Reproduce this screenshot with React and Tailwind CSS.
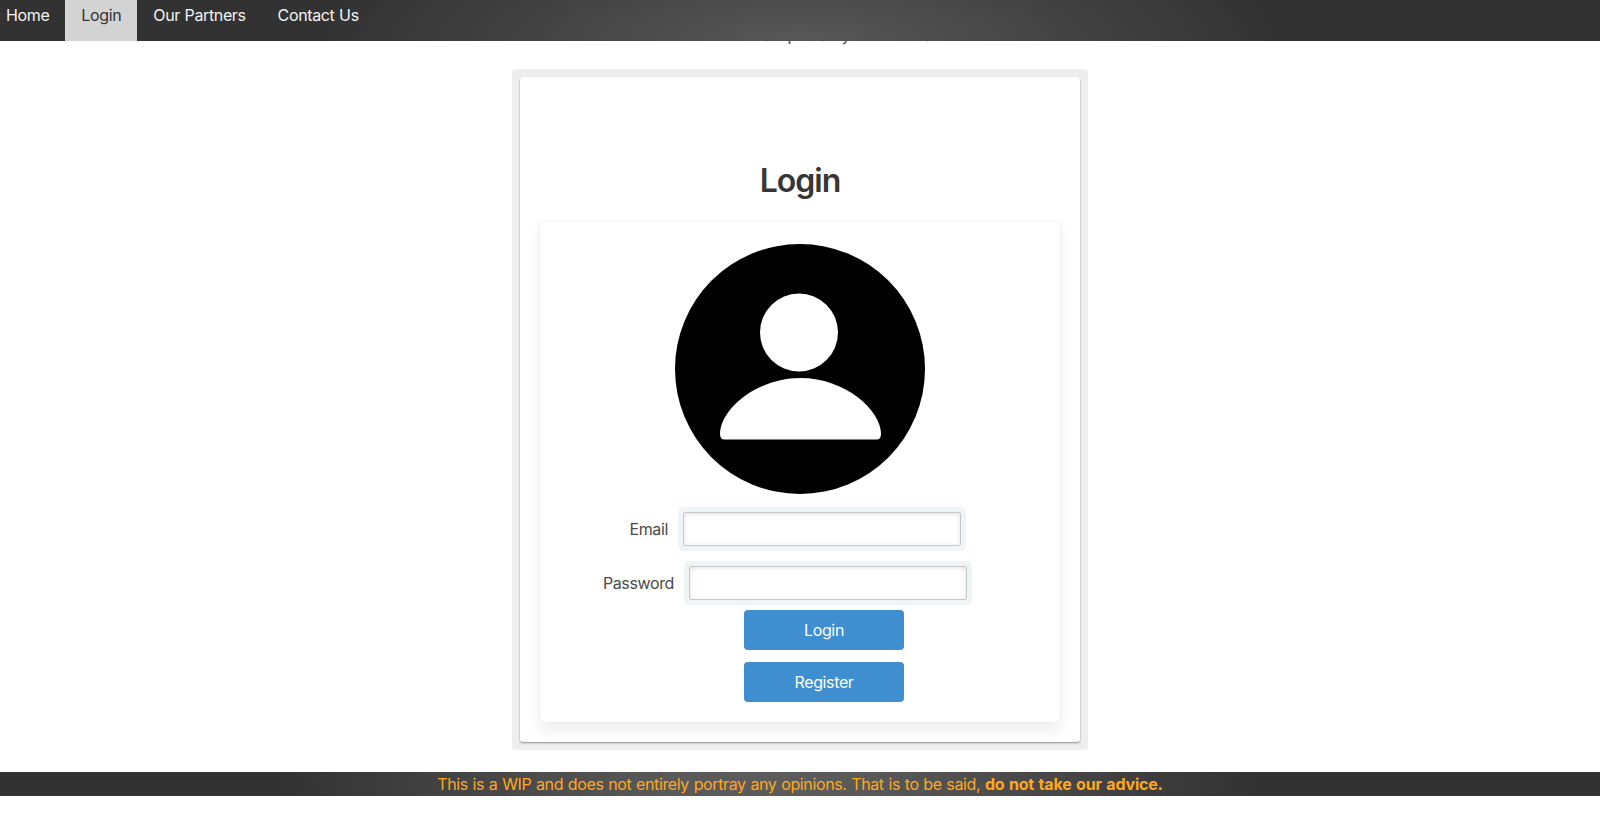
const font = "font-['Inter','Liberation_Sans',sans-serif] tracking-[-0.37px] [word-spacing:0.55px]";

function NavItem({ label, active }) {
  return (
    <a className={active
      ? "flex h-full items-start bg-[#d3d3d3] px-4 pt-[3px] text-[#333]"
      : "flex h-full items-start px-4 pt-[3px] text-[#f2f2f2]"}>
      {label}
    </a>
  );
}

function Field({ label, type, className }) {
  return (
    <div className={className}>
      <label className="mr-[15px]">{label}</label>
      <input
        type={type}
        className="h-[34px] w-[278px] rounded-[2px] border border-[#c8c8c8] bg-white shadow-[0_0_0_5px_#eff4f7,inset_0_1px_4px_rgba(180,180,180,0.4)] outline-none"
      />
    </div>
  );
}

function Avatar() {
  return (
    <svg width="250" height="250" viewBox="0 0 250 250" className="block">
      <circle cx="125" cy="125" r="125" fill="#000" />
      <circle cx="124" cy="88.5" r="39" fill="#fff" />
      <path d="M125.500 134C170 134 206 166 206 190Q206 195.500 201.500 195.500H49.500Q45 195.500 45 190C45 166 81 134 125.500 134Z" fill="#fff" />
    </svg>
  );
}

export default function App() {
  return (
    <div className={`flex h-[814px] w-full flex-col overflow-hidden bg-white text-base leading-6 text-[#4a4a4a] ${font}`}>
      <header className="relative z-10 flex h-[41px] shrink-0 bg-[radial-gradient(480px_130px_at_50%_100%,#585858_0%,#323232_100%)]">
        <nav className="-ml-2.5 flex h-full">
          <NavItem label="Home" />
          <NavItem label="Login" active />
          <NavItem label="Our Partners" />
          <NavItem label="Contact Us" />
        </nav>
      </header>
      <p className="-mt-[18px] h-6 shrink-0 pl-[22px] text-center">Our collection of art primarily for those at home</p>
      <main className="mx-auto mt-[22px] h-[681px] w-[576px] shrink-0 rounded bg-[#eee] p-2">
        <div className="h-[665px] rounded-[3px] bg-white px-5 pt-[84px] shadow-[0_1px_2px_rgba(0,0,0,0.4)]">
          <h1 className="h-[60px] text-center text-[32px] leading-10 font-semibold tracking-[-1px] text-[#363636]">Login</h1>
          <section className="flex h-[501px] flex-col items-center rounded-[5px] bg-white pt-[23px] shadow-[0_8px_16px_rgba(0,0,0,0.08),0_0_2px_rgba(0,0,0,0.1)]">
            <Avatar />
            <Field label="Email" type="email" className="mt-[18px] flex w-[520px] items-center justify-end pr-[99px]" />
            <Field label="Password" type="password" className="mt-5 flex w-[520px] items-center justify-end pr-[93px]" />
            <div className="mt-2.5 ml-12 flex flex-col gap-3">
              <button className="h-10 w-40 rounded bg-[#3e8ed0] text-white">Login</button>
              <button className="h-10 w-40 rounded bg-[#3e8ed0] text-white">Register</button>
            </div>
          </section>
        </div>
      </main>
      <footer className="mt-[22px] h-6 shrink-0 bg-[radial-gradient(490px_130px_at_48%_50%,#5c5c5c_0%,#595959_20%,#323232_100%)] text-center text-[#ffa81c]">
        This is a WIP and does not entirely portray any opinions. That is to be said, <strong className="font-bold tracking-[-0.2px] [word-spacing:1px]">do not take our advice.</strong>
      </footer>
    </div>
  );
}
